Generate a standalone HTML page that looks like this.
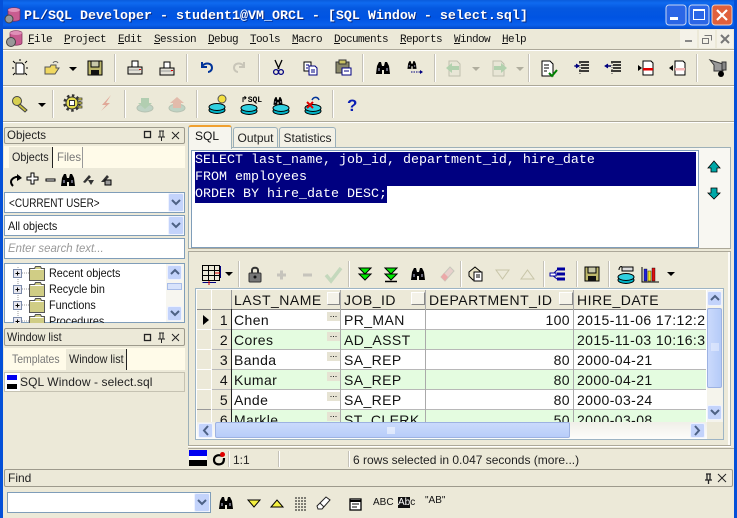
<!DOCTYPE html>
<html><head><meta charset="utf-8"><style>
html,body{margin:0;padding:0}
body{width:737px;height:518px;overflow:hidden;position:relative;background:#ECE9D8;font-family:"Liberation Sans",sans-serif;font-size:12px;color:#000}
div{position:absolute;box-sizing:border-box;white-space:nowrap}
span.sx{display:inline-block;transform:scaleX(.9);transform-origin:0 50%}
.m{font-family:"Liberation Mono",monospace;font-size:11px;letter-spacing:-.6px;top:33px;line-height:14px;color:#111}
.m u{text-decoration:underline}
.ln{background:#ACA899;height:1px}
.ll{background:#fff;height:1px}
.sp{width:2px;background:#C5C2B8;border-right:1px solid #fff}
.hd{background:#ECE9D8;border:1px solid #9D9A8C;border-radius:2px;line-height:15px;padding-left:2px;color:#222}
.box{background:#fff;border:1px solid #7F9DB9}
.sql{font-family:"Liberation Mono",monospace;font-size:13.33px;color:#fff;left:195px;line-height:17px;height:17px}
.sel{background:#000080;left:195px;height:17px}
.c{font-size:14px;line-height:20px;height:20px;color:#111;letter-spacing:.4px}
.h{font-size:14px;line-height:20px;height:20px;color:#111;letter-spacing:.5px}
.v{background:#B8B8B8;width:1px}
.r{height:1px;background:#B8B8B8;left:211px;width:495px}
.g{background:#E4FCE0;height:19px}
.e{width:13px;height:9px;background:#E6E3D3;font-size:9px;line-height:5px;text-align:center;color:#000;left:327px}
.t{font-size:12px;line-height:16px;color:#111;left:49px}
.tab{border:1px solid #9BB0BA;border-bottom:none;border-radius:3px 3px 0 0;background:#F3F1E6;text-align:center;font-size:12px;line-height:20px;color:#222}
.cb{background:#C3D3FB;border:1px solid #EEF2FE;border-radius:2px}
</style></head><body>
<div style="left:0;top:0;width:737px;height:29px;background:linear-gradient(#0A5BDC 0,#0F6AF0 3px,#0558E0 8px,#0054E3 18px,#0A60EC 25px,#0348C8 29px)"></div>
<div style="left:0;top:0;width:3px;height:518px;background:#0450D8"></div>
<div style="left:734px;top:0;width:3px;height:518px;background:#0450D8"></div>
<div style="left:24px;top:9px;font:bold 13.33px/15px 'Liberation Mono',monospace;color:#fff;text-shadow:1px 1px 0 #0A2A80">PL/SQL Developer - student1@VM_ORCL - [SQL Window - select.sql]</div>

<div class="m" style="left:28px"><u>F</u>ile</div>
<div class="m" style="left:64px"><u>P</u>roject</div>
<div class="m" style="left:118px"><u>E</u>dit</div>
<div class="m" style="left:154px"><u>S</u>ession</div>
<div class="m" style="left:208px"><u>D</u>ebug</div>
<div class="m" style="left:250px"><u>T</u>ools</div>
<div class="m" style="left:292px"><u>M</u>acro</div>
<div class="m" style="left:334px"><u>D</u>ocuments</div>
<div class="m" style="left:400px"><u>R</u>eports</div>
<div class="m" style="left:454px"><u>W</u>indow</div>
<div class="m" style="left:502px"><u>H</u>elp</div>
<div style="left:680px;top:30px;width:17px;height:18px;background:#F4F2E8"></div>
<div style="left:699px;top:30px;width:16px;height:18px;background:#F4F2E8"></div>
<div style="left:717px;top:30px;width:16px;height:18px;background:#F4F2E8"></div>

<div class="ln" style="left:3px;top:49px;width:731px"></div><div class="ll" style="left:3px;top:50px;width:731px"></div>
<div class="ln" style="left:3px;top:85px;width:731px"></div><div class="ll" style="left:3px;top:86px;width:731px"></div>
<div class="ln" style="left:3px;top:121px;width:731px"></div><div class="ll" style="left:3px;top:122px;width:731px"></div>

<div class="sp" style="left:114px;top:54px;height:28px"></div><div class="sp" style="left:186px;top:54px;height:28px"></div>
<div class="sp" style="left:258px;top:54px;height:28px"></div><div class="sp" style="left:362px;top:54px;height:28px"></div>
<div class="sp" style="left:434px;top:54px;height:28px"></div><div class="sp" style="left:528px;top:54px;height:28px"></div>
<div class="sp" style="left:696px;top:54px;height:28px"></div>
<div class="sp" style="left:52px;top:90px;height:28px"></div><div class="sp" style="left:124px;top:90px;height:28px"></div>
<div class="sp" style="left:196px;top:90px;height:28px"></div><div class="sp" style="left:332px;top:90px;height:28px"></div>

<!-- left panel -->
<div class="hd" style="left:4px;top:127px;width:181px;height:17px"><span class="sx" style="transform:scaleX(.96)">Objects</span></div>
<div style="left:4px;top:146px;width:181px;height:22px;background:#FFFBE9"></div>
<div style="left:9px;top:147px;width:44px;height:21px;background:#ECE9D8;border-right:1px solid #222;line-height:20px;padding-left:3px;color:#222"><span class="sx">Objects</span></div>
<div style="left:57px;top:147px;width:26px;height:21px;border-right:1px solid #999;line-height:20px;color:#777"><span class="sx" style="transform:scaleX(.95)">Files</span></div>
<div class="box" style="left:4px;top:192px;width:181px;height:21px;line-height:20px;padding-left:4px;color:#111"><span class="sx" style="transform:scaleX(.83)">&lt;CURRENT USER&gt;</span></div>
<div class="box" style="left:4px;top:215px;width:181px;height:21px;line-height:20px;padding-left:3px;color:#111"><span class="sx">All objects</span></div>
<div class="box" style="left:4px;top:238px;width:181px;height:21px;line-height:19px;padding-left:3px;color:#999;font-style:italic;font-size:12px"><span class="sx" style="transform:scaleX(.95)">Enter search text...</span></div>
<div class="box" style="left:4px;top:263px;width:181px;height:60px;overflow:hidden;background:#fff"></div>
<div class="t" style="top:265px"><span class="sx">Recent objects</span></div>
<div class="t" style="top:281px"><span class="sx">Recycle bin</span></div>
<div class="t" style="top:297px"><span class="sx">Functions</span></div>
<div style="left:49px;top:313px;height:10px;overflow:hidden;font-size:12px;line-height:16px;color:#111"><span class="sx">Procedures</span></div>
<div class="hd" style="left:4px;top:328px;width:181px;height:18px;line-height:16px"><span class="sx">Window list</span></div>
<div style="left:4px;top:348px;width:181px;height:22px;background:#FFFBE9"></div>
<div style="left:12px;top:349px;line-height:21px;color:#777"><span class="sx" style="transform:scaleX(.87)">Templates</span></div>
<div style="left:66px;top:349px;width:61px;height:21px;background:#ECE9D8;border-right:1px solid #222;line-height:21px;padding-left:3px;color:#222"><span class="sx">Window list</span></div>
<div style="left:4px;top:372px;width:181px;height:20px;background:#ECE9D8;border:1px solid #C5C2B2"></div>
<div style="left:5px;top:373px;width:15px;height:18px;background:#fff"></div>
<div style="left:20px;top:374px;font-size:12px;line-height:16px;color:#222;letter-spacing:.1px">SQL Window - select.sql</div>

<!-- main tabs / editor -->
<div style="left:188px;top:147px;width:543px;height:302px;background:#F6F5EE;border:1px solid #9DB0B8;border-bottom:none"></div>
<div class="tab" style="left:233px;top:127px;width:45px;height:20px;line-height:21px">Output</div>
<div class="tab" style="left:279px;top:127px;width:57px;height:20px;line-height:21px">Statistics</div>
<div style="left:188px;top:125px;width:44px;height:24px;background:#F6F5EE;border:1px solid #9DB0B8;border-top:2px solid #F0A030;border-bottom:none;border-radius:3px 3px 0 0;line-height:18px;padding-left:6px;color:#111;font-size:12px">SQL</div>
<div class="box" style="left:191px;top:150px;width:508px;height:98px"></div>
<div style="left:699px;top:148px;width:31px;height:100px;background:#F8F7F2"></div>
<div style="left:188px;top:248px;width:543px;height:1px;background:#ACA899"></div>
<div style="left:188px;top:249px;width:543px;height:3px;background:#ECE9D8"></div>
<div class="ln" style="left:188px;top:251px;width:543px"></div>
<div style="left:189px;top:252px;width:541px;height:193px;background:#ECE9D8;border-right:2px solid #FCFBF6"></div>
<div class="sel" style="top:152px;width:501px"></div><div class="sel" style="top:169px;width:501px"></div><div class="sel" style="top:186px;width:192px"></div>
<div class="sql" style="top:152px">SELECT last_name, job_id, department_id, hire_date</div>
<div class="sql" style="top:169px">FROM employees</div>
<div class="sql" style="top:186px">ORDER BY hire_date DESC;</div>

<div class="sp" style="left:238px;top:261px;height:26px"></div><div class="sp" style="left:348px;top:261px;height:26px"></div>
<div class="sp" style="left:460px;top:261px;height:26px"></div><div class="sp" style="left:543px;top:261px;height:26px"></div>
<div class="sp" style="left:576px;top:261px;height:26px"></div><div class="sp" style="left:608px;top:261px;height:26px"></div>

<!-- grid -->
<div style="left:195px;top:288px;width:529px;height:152px;background:#fff;border:1px solid #9DB4C4;overflow:hidden"></div>
<div style="left:197px;top:290px;width:509px;height:19px;background:#ECE9D8"></div>
<div style="left:197px;top:309px;width:34px;height:113px;background:#ECE9D8"></div>
<div class="g" style="left:232px;top:330px;width:474px"></div>
<div class="g" style="left:232px;top:370px;width:474px"></div>
<div class="g" style="left:232px;top:410px;width:474px;height:12px"></div>
<div style="left:197px;top:309px;width:509px;height:1px;background:#888"></div>
<div class="r" style="top:329px"></div><div class="r" style="top:349px"></div><div class="r" style="top:369px"></div><div class="r" style="top:389px"></div><div class="r" style="top:409px"></div>
<div style="left:197px;top:329px;width:14px;height:1px;background:#fff"></div><div style="left:197px;top:349px;width:14px;height:1px;background:#fff"></div><div style="left:197px;top:369px;width:14px;height:1px;background:#fff"></div><div style="left:197px;top:389px;width:14px;height:1px;background:#fff"></div><div style="left:197px;top:409px;width:14px;height:1px;background:#999"></div>
<div class="v" style="left:211px;top:290px;height:132px;background:#fff"></div>
<div class="v" style="left:231px;top:309px;height:113px;background:#222"></div>
<div class="v" style="left:231px;top:290px;height:19px;background:#999"></div>
<div class="v" style="left:340px;top:290px;height:132px;background:#aaa"></div>
<div class="v" style="left:425px;top:290px;height:132px;background:#aaa"></div>
<div class="v" style="left:573px;top:290px;height:132px;background:#aaa"></div>
<div style="left:327px;top:292px;width:13px;height:13px;background:#F4F2E8;border:1px solid;border-color:#fff #888 #888 #fff"></div>
<div style="left:411px;top:292px;width:14px;height:13px;background:#F4F2E8;border:1px solid;border-color:#fff #888 #888 #fff"></div>
<div style="left:559px;top:292px;width:14px;height:13px;background:#F4F2E8;border:1px solid;border-color:#fff #888 #888 #fff"></div>
<div class="h" style="left:234px;top:290px">LAST_NAME</div>
<div class="h" style="left:344px;top:290px">JOB_ID</div>
<div class="h" style="left:429px;top:290px">DEPARTMENT_ID</div>
<div class="h" style="left:577px;top:290px">HIRE_DATE</div>
<div class="c" style="left:211px;top:310px;width:17px;text-align:right">1</div><div class="c" style="left:211px;top:330px;width:17px;text-align:right">2</div><div class="c" style="left:211px;top:350px;width:17px;text-align:right">3</div><div class="c" style="left:211px;top:370px;width:17px;text-align:right">4</div><div class="c" style="left:211px;top:390px;width:17px;text-align:right">5</div>
<div class="c" style="left:234px;top:310px">Chen</div><div class="c" style="left:234px;top:330px">Cores</div><div class="c" style="left:234px;top:350px">Banda</div><div class="c" style="left:234px;top:370px">Kumar</div><div class="c" style="left:234px;top:390px">Ande</div>
<div class="c" style="left:344px;top:310px">PR_MAN</div><div class="c" style="left:344px;top:330px">AD_ASST</div><div class="c" style="left:344px;top:350px">SA_REP</div><div class="c" style="left:344px;top:370px">SA_REP</div><div class="c" style="left:344px;top:390px">SA_REP</div>
<div class="c" style="left:425px;top:310px;width:145px;text-align:right">100</div><div class="c" style="left:425px;top:350px;width:145px;text-align:right">80</div><div class="c" style="left:425px;top:370px;width:145px;text-align:right">80</div><div class="c" style="left:425px;top:390px;width:145px;text-align:right">80</div>
<div style="left:576px;top:310px;width:130px;height:120px;overflow:hidden"><div class="c" style="left:1px;top:0">2015-11-06 17:12:23</div><div class="c" style="left:1px;top:20px">2015-11-03 10:16:36</div><div class="c" style="left:1px;top:40px">2000-04-21</div><div class="c" style="left:1px;top:60px">2000-04-21</div><div class="c" style="left:1px;top:80px">2000-03-24</div></div>
<div style="left:197px;top:410px;width:509px;height:12px;overflow:hidden">
<div class="c" style="left:14px;top:0;width:17px;text-align:right">6</div><div class="c" style="left:37px;top:0">Markle</div><div class="c" style="left:147px;top:0">ST_CLERK</div><div class="c" style="left:228px;top:0;width:145px;text-align:right">50</div><div class="c" style="left:380px;top:0">2000-03-08</div>
</div>
<div class="e" style="top:312px">...</div><div class="e" style="top:332px">...</div><div class="e" style="top:352px">...</div><div class="e" style="top:372px">...</div><div class="e" style="top:392px">...</div><div class="e" style="top:412px">...</div>

<!-- v scrollbar -->
<div style="left:707px;top:290px;width:16px;height:132px;background:#F5F4EC"></div>
<div class="cb" style="left:707px;top:291px;width:15px;height:15px"></div>
<div style="left:707px;top:308px;width:15px;height:80px;background:linear-gradient(90deg,#CBDAFC,#B5CBF8);border:1px solid #9DB2E2;border-radius:2px"></div>
<div class="cb" style="left:707px;top:405px;width:15px;height:15px"></div>
<!-- h scrollbar -->
<div style="left:197px;top:422px;width:510px;height:17px;background:linear-gradient(#F0EFE8,#FDFDFB)"></div>
<div class="cb" style="left:198px;top:423px;width:15px;height:15px"></div>
<div style="left:215px;top:422px;width:355px;height:16px;background:linear-gradient(#CADAFC,#B8CDF9);border:1px solid #9DB2E2;border-radius:2px"></div>
<div class="cb" style="left:690px;top:423px;width:15px;height:15px"></div>
<div style="left:707px;top:422px;width:16px;height:17px;background:#ECE9D8"></div>

<!-- bottom -->
<div style="left:188px;top:445px;width:543px;height:4px;background:#ECE9D8"></div>
<div class="ln" style="left:188px;top:445px;width:543px"></div><div class="ll" style="left:188px;top:446px;width:543px"></div>
<div class="ln" style="left:188px;top:448px;width:546px"></div>
<div style="left:189px;top:450px;width:18px;height:6px;background:#0000F0"></div><div style="left:189px;top:456px;width:18px;height:4px;background:#fff"></div><div style="left:189px;top:460px;width:18px;height:6px;background:#000"></div>
<div class="sp" style="left:228px;top:451px;height:16px"></div><div class="sp" style="left:278px;top:451px;height:16px"></div><div class="sp" style="left:348px;top:451px;height:16px"></div>
<div style="left:233px;top:452px;line-height:16px;color:#222">1:1</div>
<div style="left:353px;top:452px;line-height:16px;color:#222;font-size:12px">6 rows selected in 0.047 seconds (more...)</div>
<div class="hd" style="left:4px;top:469px;width:729px;height:18px;line-height:16px;padding-left:3px">Find</div>
<div class="box" style="left:7px;top:492px;width:204px;height:21px"></div>
<div class="cb" style="left:194px;top:493px;width:16px;height:19px"></div>
<div class="cb" style="left:168px;top:193px;width:16px;height:19px"></div>
<div class="cb" style="left:168px;top:216px;width:16px;height:19px"></div>
<div style="left:166px;top:264px;width:18px;height:58px;background:#F7F6F0"></div>
<div class="cb" style="left:167px;top:265px;width:15px;height:15px"></div>
<div style="left:167px;top:283px;width:15px;height:7px;background:#D8E3FB;border:1px solid #A8BCE8"></div>
<div class="cb" style="left:167px;top:306px;width:15px;height:15px"></div>
<div style="left:373px;top:497px;font-size:10px;line-height:12px;color:#111">ABC</div>
<div style="left:398px;top:497px;font-size:10px;line-height:12px;color:#111"><span style="background:#111;color:#fff">Ab</span>c</div>
<div style="left:425px;top:495px;font-size:10px;line-height:12px;color:#111">"AB"</div>

<svg width="737" height="518" viewBox="0 0 737 518" style="position:absolute;left:0;top:0">
<defs>
<g id="bino"><path d="M-7 6 L-6 -2 L-4 -6 L-2 -6 L-1 -2 H1 L2 -6 L4 -6 L6 -2 L7 6 H1 V2 H-1 V6Z" fill="#000"/><path d="M-5 0h2v3h-2zM3 0h2v3h-2z" fill="#667"/></g>
<path id="dn" d="M-4 -2H4L0 2Z" fill="#000"/>
<path id="chd" d="M-4 -2L0 2L4 -2" fill="none" stroke="#4D6185" stroke-width="2"/>
<path id="chu" d="M-4 2L0 -2L4 2" fill="none" stroke="#4D6185" stroke-width="2"/>
<g id="disk"><path d="M-7 -7H7V7H-7Z" fill="#BDB76B" stroke="#000"/><rect x="-4" y="-7" width="8" height="6" fill="#C8C8A8" stroke="#000"/><rect x="-4" y="2" width="8" height="5" fill="#111"/></g>
<g id="db"><ellipse cx="0" cy="4" rx="8" ry="3.5" fill="#00B4C8" stroke="#000"/><ellipse cx="0" cy="1" rx="8" ry="3.5" fill="#30D0E0" stroke="#000"/></g>
<g id="folder"><path d="M0 2H5L6 0H11L12 2H15V14H0Z" fill="#D0CD85" stroke="#555"/><path d="M1 3H14" stroke="#fff"/></g>
<g id="plus"><rect x="0" y="0" width="8" height="8" fill="#E8E8F0" stroke="#7A8AAA"/><path d="M2 4H6M4 2V6" stroke="#000"/></g>
<g id="print"><path d="M-3 -7H3V-1H-3Z" fill="#fff" stroke="#000"/><path d="M-7 -1H7V6H-7Z" fill="#E4E2D8" stroke="#000"/><path d="M-6 2H5" stroke="#999"/><rect x="4" y="1" width="2" height="1" fill="#d00"/></g>
<g id="doc"><path d="M-5 -7H3L5 -5V7H-5Z" fill="#fff" stroke="#000"/></g>
<g id="lines"><path d="M-3 -5H7M-1 -2H7M-1 1H7M-3 4H7" stroke="#000" stroke-width="1.4"/><path d="M-2 -6V7" stroke="#444" stroke-dasharray="1 1"/><path d="M-7 -1H-3" stroke="#004" stroke-width="1.5"/></g>
</defs>

<!-- app icons -->
<path d="M8 10C8 7 20 7 20 10V19C20 22 8 22 8 19Z" fill="#C85C90" stroke="#7A2C58" stroke-width=".7"/><ellipse cx="14" cy="10" rx="6" ry="2" fill="#E090B8"/><circle cx="9" cy="19" r="4" fill="#999" stroke="#444"/>
<path d="M10 33C10 30 22 30 22 33V43C22 46 10 46 10 43Z" fill="#C85C90" stroke="#7A2C58" stroke-width=".7"/><ellipse cx="16" cy="33" rx="6" ry="2" fill="#E090B8"/><circle cx="11" cy="42" r="4.500" fill="#999" stroke="#444"/>

<!-- window buttons -->
<rect x="666" y="5" width="20" height="20" rx="3" fill="#2B66E6" stroke="#C8D6F4"/><rect x="670" y="17" width="8" height="3" fill="#fff"/>
<rect x="689" y="5" width="20" height="20" rx="3" fill="#2B66E6" stroke="#C8D6F4"/><rect x="693.5" y="9.5" width="11" height="10" fill="none" stroke="#fff"/><rect x="693" y="9" width="12" height="2" fill="#fff"/>
<rect x="712" y="5" width="20" height="20" rx="3" fill="#E0603C" stroke="#F0D0C0"/><path d="M717 10L727 20M727 10L717 20" stroke="#fff" stroke-width="2.2"/>
<path d="M685 41H692" stroke="#888" stroke-width="2"/><path d="M704.500 35.500H711.500V40.500M702.500 38.500H708.500V43.500H702.500Z" fill="none" stroke="#777"/><path d="M721 35L729 43M729 35L721 43" stroke="#777" stroke-width="2"/>

<!-- toolbar 1 -->
<g transform="translate(20,68)"><path d="M-4 -5H2L4 -3V6H-4Z" fill="#fff" stroke="#000"/><path d="M-7 -7L-5 -5M7 -7L5 -5M-8 0H-6M6 0H8M-7 7L-5 5M7 7L5 5M0 -9V-7" stroke="#000"/></g>
<g transform="translate(52,68)"><path d="M-7 -1H-2L-1 -3H4V0H7L3 6H-7Z" fill="#F0D860" stroke="#555"/><path d="M1 -5C2 -7 5 -7 6 -5" fill="none" stroke="#666"/></g>
<use href="#dn" x="73" y="69"/>
<use href="#disk" x="95" y="68"/>
<use href="#print" x="135" y="68"/><use href="#print" x="167" y="69"/>
<path d="M202 66C206 62 212 63 212 68C212 70 210 72 208 72M202 62V67H207" fill="none" stroke="#003399" stroke-width="2"/>
<path d="M244 66C240 62 234 63 234 68C234 70 236 72 238 72M244 62V67H239" fill="none" stroke="#C8C5B8" stroke-width="2"/>
<g fill="none" stroke="#000"><path d="M275 60L279 69M282 60L278 69" stroke-width="1.3"/></g><circle cx="276" cy="72" r="2.4" fill="none" stroke="#000080" stroke-width="1.3"/><circle cx="281" cy="72" r="2.4" fill="none" stroke="#000080" stroke-width="1.3"/>
<path d="M304 62H311V71H304Z" fill="#fff" stroke="#000"/><path d="M309 66H315L317 68V75H309Z" fill="#fff" stroke="#000080"/><path d="M306 65H309M306 68H308M311 70H315M311 72H315" stroke="#000080"/>
<path d="M336 62H349V73H336Z" fill="#8A8868" stroke="#333"/><rect x="339" y="60" width="7" height="4" fill="#C8C060" stroke="#333"/><path d="M342 68H351V75H342Z" fill="#fff" stroke="#000080"/><path d="M344 71H349" stroke="#000080"/>
<use href="#bino" x="383" y="68"/>
<use href="#bino" transform="translate(412,65) scale(.65)"/><path d="M411 72H421" stroke="#000080" stroke-dasharray="1.500 1"/><path d="M420 70L423 72L420 74Z" fill="#000080"/>
<g opacity=".8"><path d="M449 61H457L460 64V76H449Z" fill="#E8E6D6" stroke="#B4B6A4"/><path d="M446 68L452 63V66H459V70H452V73Z" fill="#A4CCA4"/></g>
<path d="M472 67H480L476 71Z" fill="#B0AE9E"/>
<g opacity=".8"><path d="M493 61H501L504 64V76H493Z" fill="#E8E6D6" stroke="#B4B6A4"/><path d="M507 68L501 63V66H494V70H501V73Z" fill="#A4CCA4"/></g>
<path d="M516 67H524L520 71Z" fill="#B0AE9E"/>
<g transform="translate(542,60)"><path d="M0 1H8L11 4V16H0Z" fill="#fff" stroke="#000"/><path d="M2 5H7M2 8H7M2 11H5" stroke="#555" stroke-width="1.4"/><path d="M7 13L10 16L15 10" fill="none" stroke="#008000" stroke-width="2"/></g>
<use href="#lines" x="582" y="67"/><path d="M574 66H578M576 64L579 66L576 68" stroke="#000080" fill="#000080"/>
<use href="#lines" x="614" y="67"/><path d="M606 66H610M608 64L605 66L608 68" stroke="#000080" fill="#000080"/>
<g transform="translate(648,68)"><use href="#doc"/><rect x="-5" y="0" width="10" height="2.500" fill="#E00000"/><path d="M-10 -3L-6 0L-10 3Z"/></g>
<g transform="translate(680,68)"><use href="#doc"/><rect x="-5" y="0" width="10" height="2.500" fill="#F4B4B4"/><path d="M-7 -3L-11 0L-7 3Z"/></g>
<g transform="translate(718,66)"><path d="M-8 -6L5 -2V5H-4V-1Z" fill="#999" stroke="#333"/><rect x="4" y="-4" width="4" height="8" fill="#888" stroke="#333"/><circle cx="3" cy="8" r="3" fill="#000"/></g>

<!-- toolbar 2 -->
<g transform="translate(20,104)"><circle cx="-3" cy="-3" r="4.500" fill="#D8D050" stroke="#444"/><path d="M0 0L7 6L5 8L-2 2Z" fill="#C8C040" stroke="#444"/></g>
<use href="#dn" x="42" y="105"/>
<g transform="translate(73,103)"><circle r="6" cx="-1" fill="#E4DC50" stroke="#333"/><circle r="7.500" cx="-1" fill="none" stroke="#333" stroke-width="2.500" stroke-dasharray="2.500 2.500"/><path d="M5 -5H9V-3H5ZM5 -1H9V1H5ZM5 3H9V5H5Z" fill="#E4DC50" stroke="#333" stroke-width=".7"/><rect x="-3.500" y="-2.500" width="5" height="5" fill="#fff" stroke="#333"/></g>
<path d="M111 95L102 105L106 105L101 111L110 103H106Z" fill="#E0A898"/>
<g opacity=".8"><ellipse cx="145" cy="108" rx="8" ry="4" fill="#B4CEC0" stroke="#A8B8A8"/><path d="M141 98H149V103H152L145 109L138 103H141Z" fill="#A4C8A8"/></g>
<g opacity=".8"><ellipse cx="177" cy="108" rx="8" ry="4" fill="#B4CEC0" stroke="#A8B8A8"/><path d="M173 108V103H170L177 97L184 103H181V108Z" fill="#E0B0A0"/></g>
<use href="#db" x="217" y="106"/><circle cx="222" cy="99" r="4" fill="#F4E040" stroke="#555"/>
<use href="#db" x="249" y="107"/><text x="241" y="102" font-family="Liberation Mono" font-size="8" font-weight="bold">↱SQL</text>
<use href="#db" x="281" y="107"/><use href="#bino" transform="translate(278,101) scale(.65)"/>
<use href="#db" x="313" y="107"/><path d="M307 102L313 108M313 102L307 108" stroke="#E00000" stroke-width="2"/><path d="M312 100C314 96 318 97 319 100" fill="none" stroke="#003399" stroke-width="1.5"/>
<text x="347" y="111" font-family="Liberation Sans" font-size="17" font-weight="bold" fill="#0A1EB4">?</text>

<!-- panel header icons -->
<g fill="none" stroke="#222"><rect x="144.500" y="131.500" width="6" height="6" stroke-width="1.300"/><path d="M172 132L179 139M179 132L172 139"/><path d="M159 131H164M160 131V137M163 131V137M158 137H165"/><path d="M161.500 137V141"/></g>
<g fill="none" stroke="#222"><rect x="144.500" y="334.500" width="6" height="6" stroke-width="1.300"/><path d="M172 334L179 341M179 334L172 341"/><path d="M159 333H164M160 333V339M163 333V339M158 339H165"/><path d="M161.500 339V343"/></g>
<g fill="none" stroke="#222"><path d="M706 474H711M707 474V480M710 474V480M705 480H712M708.500 480V484" stroke-width="1.300"/><path d="M718 474L726 482M726 474L718 482"/></g>

<!-- objects toolbar -->
<path d="M20 177C15 176 11 179 11 182C11 184 12 185 13 186" fill="none" stroke="#000" stroke-width="2"/><path d="M17 174L22 178L17 181Z" fill="#000"/>
<path d="M31 173H34V177H38V180H34V184H31V180H27V177H31Z" fill="#fff" stroke="#000"/>
<rect x="46" y="179" width="9" height="2" fill="#fff" stroke="#000"/>
<use href="#bino" x="68" y="180"/>
<path d="M83 182L89 175L91 177L85 183ZM88 180H94L91 185Z" fill="#333"/>
<path d="M101 182L107 175L109 177L104 182Z" fill="#333"/><rect x="105" y="180" width="6" height="5" fill="#999" stroke="#000"/>
<use href="#chd" x="176" y="202"/><use href="#chd" x="176" y="225"/><use href="#chd" x="202" y="502"/>
<use href="#chu" x="175" y="272"/><use href="#chd" x="175" y="313"/>

<!-- tree -->
<path d="M18 267V323M22 273H29M22 289H29M22 305H29M22 321H29" stroke="#999" stroke-dasharray="1 1"/>
<use href="#plus" x="13.500" y="269.500"/><use href="#plus" x="13.500" y="285.500"/><use href="#plus" x="13.500" y="301.500"/>
<use href="#folder" x="29.500" y="266.500"/><use href="#folder" x="29.500" y="282.500"/><use href="#folder" x="29.500" y="298.500"/>
<svg x="5" y="264" width="160" height="59" viewBox="5 264 160 59"><use href="#plus" x="13.500" y="317.500"/><use href="#folder" x="29.500" y="314.500"/></svg>

<!-- window list icon -->
<rect x="7" y="375" width="10" height="5" fill="#0000F0"/><rect x="7" y="384" width="10" height="5" fill="#000"/>

<!-- editor arrows -->
<path d="M714 161L720 168H717V172H711V168H708Z" fill="#00A8A8" stroke="#000" stroke-width=".8"/>
<path d="M711 188H717V193H720L714 199L708 193H711Z" fill="#00A8A8" stroke="#000" stroke-width=".8"/>

<!-- grid toolbar -->
<g transform="translate(202,265)" fill="none"><path d="M.5 .5H17.500V15.500H.5ZM6.500 .5V15.500M12.500 .5V15.500M.5 5.500H17.500M.5 10.500H17.500" stroke="#000"/><path d="M18.500 1V13" stroke="#000080"/><path d="M.5 17.500H14" stroke="#000080"/><path d="M7 16V20" stroke="#E00000"/><path d="M13 8H18" stroke="#E00000"/></g>
<use href="#dn" x="229" y="274"/>
<g transform="translate(255,275)"><path d="M-3 -2V-5C-3 -8 3 -8 3 -5V-2" fill="none" stroke="#333" stroke-width="2"/><rect x="-6" y="-2" width="12" height="9" rx="1" fill="#777" stroke="#333"/><circle r="1.500" cy="2" fill="#111"/></g>
<path d="M277 275H286M281.500 270.500V279.500" stroke="#C6C4BC" stroke-width="3"/>
<path d="M303 275H312" stroke="#C6C4BC" stroke-width="3"/>
<path d="M326 275L331 281L341 268" fill="none" stroke="#C4D8BC" stroke-width="3.500"/>
<g transform="translate(365,274)"><path d="M-6 -6H6L0 0Z" fill="#00E800" stroke="#000"/><path d="M-6 0H6L0 6Z" fill="#00E800" stroke="#000"/></g>
<g transform="translate(391,274)"><path d="M-6 -6H6L0 0Z" fill="#00E800" stroke="#000"/><path d="M-6 0H6L0 6Z" fill="#00E800" stroke="#000"/><path d="M-6 7.500H6" stroke="#000" stroke-width="1.500"/></g>
<use href="#bino" x="418" y="274"/>
<g transform="translate(447,274)"><path d="M-6 3L3 -7L7 -3L-2 7Z" fill="#E8D0CC" stroke="#C8C8BC"/><path d="M-6 3L-2 7L1 3L-3 -1Z" fill="#ECA8A8"/></g>
<g transform="translate(475,274)"><path d="M-6 -2L0 -7L6 -2V6H-2L-6 2Z" fill="#E8E4C8" stroke="#000"/><path d="M-1 -2H7V7H-1Z" fill="#fff" stroke="#000"/><path d="M1 1H5M1 3H5" stroke="#000"/></g>
<path d="M496 270H509L502.500 279Z" fill="#ECE9D8" stroke="#C8C5A8"/>
<path d="M521 279H534L527.500 270Z" fill="#ECE9D8" stroke="#C8C5A8"/>
<g fill="#fff" stroke="#0000A0"><path d="M557 269H565M557 274H565M557 279H565" stroke-width="3"/><path d="M552 275L557 270M552 275H557M552 275L557 279" fill="none"/><rect x="550" y="273" width="6" height="3"/></g>
<use href="#disk" x="592" y="274"/>
<use href="#db" x="626" y="276"/><rect x="622" y="267" width="11" height="4" fill="#ddd" stroke="#000"/><path d="M619 270C619 267 621 266 622 267" fill="none" stroke="#000"/>
<g transform="translate(645,267)"><path d="M-3 0V15H14" fill="none" stroke="#000"/><rect x="-1" y="2" width="3" height="12" fill="#2020E0" stroke="#000" stroke-width=".4"/><rect x="3" y="4" width="3" height="10" fill="#F0E020" stroke="#000" stroke-width=".4"/><rect x="7" y="1" width="3" height="13" fill="#E01010" stroke="#000" stroke-width=".4"/></g>
<use href="#dn" x="671" y="274"/>

<!-- grid indicators -->
<path d="M203 315V325L209 320Z" fill="#000"/>
<use href="#chu" x="715" y="298"/><use href="#chd" x="715" y="412"/>
<path d="M208 426L204 430.500L208 435" fill="none" stroke="#4D6185" stroke-width="2"/>
<path d="M695 426L699 430.500L695 435" fill="none" stroke="#4D6185" stroke-width="2"/>
<path d="M388 427V434M390 427V434M392 427V434M394 427V434" stroke="#fff"/>
<path d="M711 344H719M711 346H719M711 348H719M711 350H719" stroke="#EEF2FE"/>

<!-- status refresh -->
<path d="M222 456C218 454 214 456 214 460C214 464 218 465 221 464C224 463 224 460 224 458" fill="none" stroke="#000" stroke-width="2.200"/><circle cx="222.500" cy="454.500" r="2.500" fill="#E00000"/>

<!-- find toolbar -->
<use href="#bino" x="226" y="503"/>
<path d="M248 500H260L254 507Z" fill="#F4F040" stroke="#000"/>
<path d="M271 507H283L277 500Z" fill="#F4F040" stroke="#000"/>
<path d="M295 498H306M295 501H306M295 504H306M295 507H306M295 510H306" stroke="#111" stroke-dasharray="2 1"/>
<g transform="translate(323,503)"><path d="M-6 3L3 -6L7 -3L-1 6H-5Z" fill="#fff" stroke="#222"/><path d="M-3 0L1 4" stroke="#222"/></g>
<rect x="350" y="499" width="11" height="11" fill="#fff" stroke="#000" stroke-width="1.300"/><path d="M350 501H361" stroke="#000" stroke-width="2"/><path d="M352 504H359M352 507H357" stroke="#000"/>
</svg>
</body></html>
